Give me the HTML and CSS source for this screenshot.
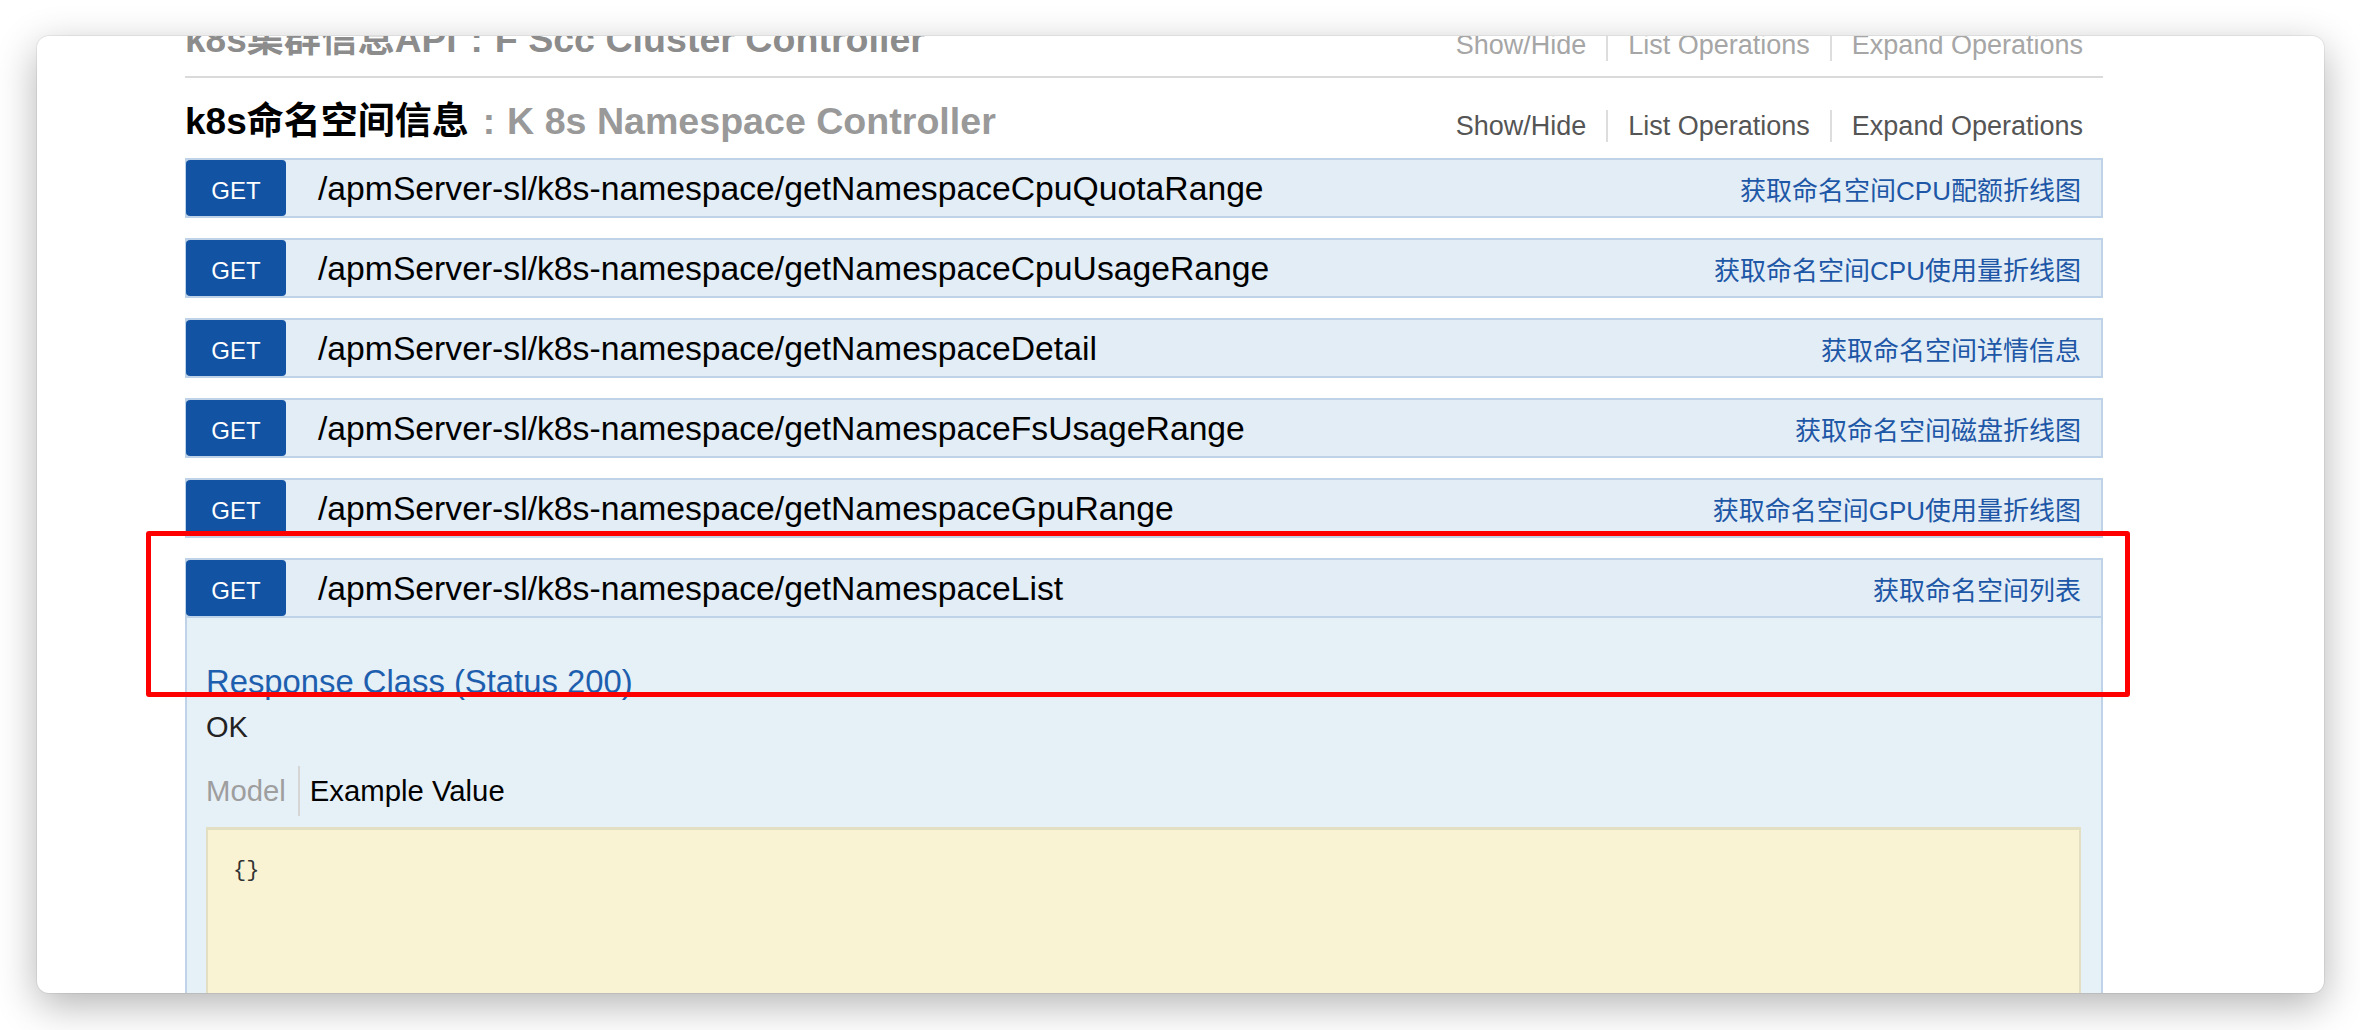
FILE: index.html
```html
<!DOCTYPE html>
<html lang="zh-CN">
<head>
<meta charset="utf-8">
<title>Swagger UI</title>
<link rel="stylesheet" href="styles.css">
</head>
<body>
<div class="window">
  <div class="wrap">
    <section class="resource resource-faded">
      <div class="res-head">
        <h2 class="res-title"><span class="res-name">k8s集群信息API</span><span class="res-sep">:</span><span class="res-desc">F Scc Cluster Controller</span></h2>
        <ul class="res-options">
          <li>Show/Hide</li><li>List Operations</li><li>Expand Operations</li>
        </ul>
      </div>
    </section>
    <section class="resource resource-current">
      <div class="res-head">
        <h2 class="res-title"><span class="res-name">k8s命名空间信息</span><span class="res-sep">:</span><span class="res-desc">K 8s Namespace Controller</span></h2>
        <ul class="res-options">
          <li>Show/Hide</li><li>List Operations</li><li>Expand Operations</li>
        </ul>
      </div>
      <ul class="operations">
        <li class="op">
          <div class="op-head">
            <span class="method">GET</span>
            <span class="path">/apmServer-sl/k8s-namespace/getNamespaceCpuQuotaRange</span>
            <span class="summary">获取命名空间CPU配额折线图</span>
          </div>
        </li>
        <li class="op">
          <div class="op-head">
            <span class="method">GET</span>
            <span class="path">/apmServer-sl/k8s-namespace/getNamespaceCpuUsageRange</span>
            <span class="summary">获取命名空间CPU使用量折线图</span>
          </div>
        </li>
        <li class="op">
          <div class="op-head">
            <span class="method">GET</span>
            <span class="path">/apmServer-sl/k8s-namespace/getNamespaceDetail</span>
            <span class="summary">获取命名空间详情信息</span>
          </div>
        </li>
        <li class="op">
          <div class="op-head">
            <span class="method">GET</span>
            <span class="path">/apmServer-sl/k8s-namespace/getNamespaceFsUsageRange</span>
            <span class="summary">获取命名空间磁盘折线图</span>
          </div>
        </li>
        <li class="op">
          <div class="op-head">
            <span class="method">GET</span>
            <span class="path">/apmServer-sl/k8s-namespace/getNamespaceGpuRange</span>
            <span class="summary">获取命名空间GPU使用量折线图</span>
          </div>
        </li>
        <li class="op op-open">
          <div class="op-head">
            <span class="method">GET</span>
            <span class="path">/apmServer-sl/k8s-namespace/getNamespaceList</span>
            <span class="summary">获取命名空间列表</span>
          </div>
          <div class="op-content">
            <h4 class="resp-title">Response Class (Status 200)</h4>
            <p class="resp-msg">OK</p>
            <div class="tabs"><span class="tab tab-off">Model</span><span class="tab tab-on">Example Value</span></div>
            <pre class="snippet">{}</pre>
          </div>
        </li>
      </ul>
    </section>
  </div>
</div>
<div class="annotation"></div>
</body>
</html>
```

FILE: styles.css
```css
* { box-sizing: border-box; }
html, body { margin: 0; padding: 0; background: #fff; }
body {
  font-family: "Liberation Sans", "Noto Sans CJK SC", sans-serif;
  padding: 36px 0 0 37px;
  position: relative;
  width: 2360px;
  height: 1030px;
  overflow: hidden;
}
.window {
  width: 2287px;
  height: 957px;
  background: #fff;
  border-radius: 12px;
  overflow: hidden;
  box-shadow: 0 12px 40px rgba(0, 0, 0, 0.30), 0 0 0 1px rgba(0, 0, 0, 0.06);
}
.wrap { width: 1918px; margin: -40px 0 0 148px; }
.resource-faded { border-bottom: 2px solid #dadada; }
.res-head {
  height: 80px;
  display: flex;
  align-items: center;
  justify-content: space-between;
}
.resource-faded .res-head { padding-top: 7px; }
.resource-current .res-head { padding-top: 6px; }
.res-title {
  margin: 0;
  font-size: 37px;
  font-weight: bold;
  color: #999;
  line-height: 40px;
  white-space: nowrap;
}
.res-name { color: #000; }
.res-sep { margin: 0 12px 0 14px; }
.res-desc { font-size: 37.6px; }
.resource-faded .res-title { color: #8c8c8c; }
.resource-faded .res-name { color: #8c8c8c; }
.res-options {
  list-style: none;
  margin: 10px 20px 0 0;
  padding: 0;
  display: flex;
}
.res-options li {
  font-size: 27px;
  color: #555;
  line-height: 32px;
  padding: 0 20px;
  border-left: 2px solid #ddd;
}
.resource-faded .res-options li { color: #a6a6a6; }
.res-options li:first-child { border-left: 0; padding-left: 0; }
.res-options li:last-child { padding-right: 0; }
.operations { list-style: none; margin: 0; padding: 0; }
.op { margin-bottom: 20px; }
.op-head {
  display: flex;
  align-items: center;
  height: 60px;
  background: #e3edf6;
  border: 2px solid #bed3e8;
}
.method {
  width: 100px;
  height: 56px;
  flex: none;
  background: #1253a4;
  color: #fff;
  font-size: 24px;
  border-radius: 4px;
  display: flex;
  align-items: center;
  justify-content: center;
  padding-top: 5px;
  margin-left: -1px;
}
.path { font-size: 33.7px; color: #000; padding-left: 32px; flex: 1; white-space: nowrap; }
.summary { font-size: 26px; color: #1d57a6; padding-right: 20px; white-space: nowrap; }
.op-content {
  background: #e6f0f7;
  border: 2px solid #bed3e8;
  border-top: 0;
  padding: 44px 20px 0 19px;
  height: 600px;
}
.resp-title {
  margin: 0;
  font-size: 32.8px;
  font-weight: normal;
  color: #1d5fae;
  line-height: 40px;
}
.resp-msg {
  margin: 5px 0 0;
  font-size: 29px;
  color: #222;
  line-height: 40px;
}
.tabs { display: flex; margin-top: 19px; height: 50px; align-items: center; }
.tab { font-size: 29.3px; line-height: 50px; }
.tab-off { color: #9e9e9e; padding-right: 12px; border-right: 2px solid #d6d6d6; }
.tab-on { color: #000; padding-left: 10px; }
.snippet {
  margin: 11px 0 0;
  height: 500px;
  background: #faf3d3;
  border: 2px solid #e3dfc3;
  border-top-width: 3px;
  padding: 28px 25px;
  font-family: "Liberation Mono", monospace;
  font-size: 22px;
  color: #333;
}
.annotation {
  position: absolute;
  left: 146px;
  top: 531px;
  width: 1984px;
  height: 166px;
  border: 5px solid #ff0000;
  border-radius: 3px;
}
```
